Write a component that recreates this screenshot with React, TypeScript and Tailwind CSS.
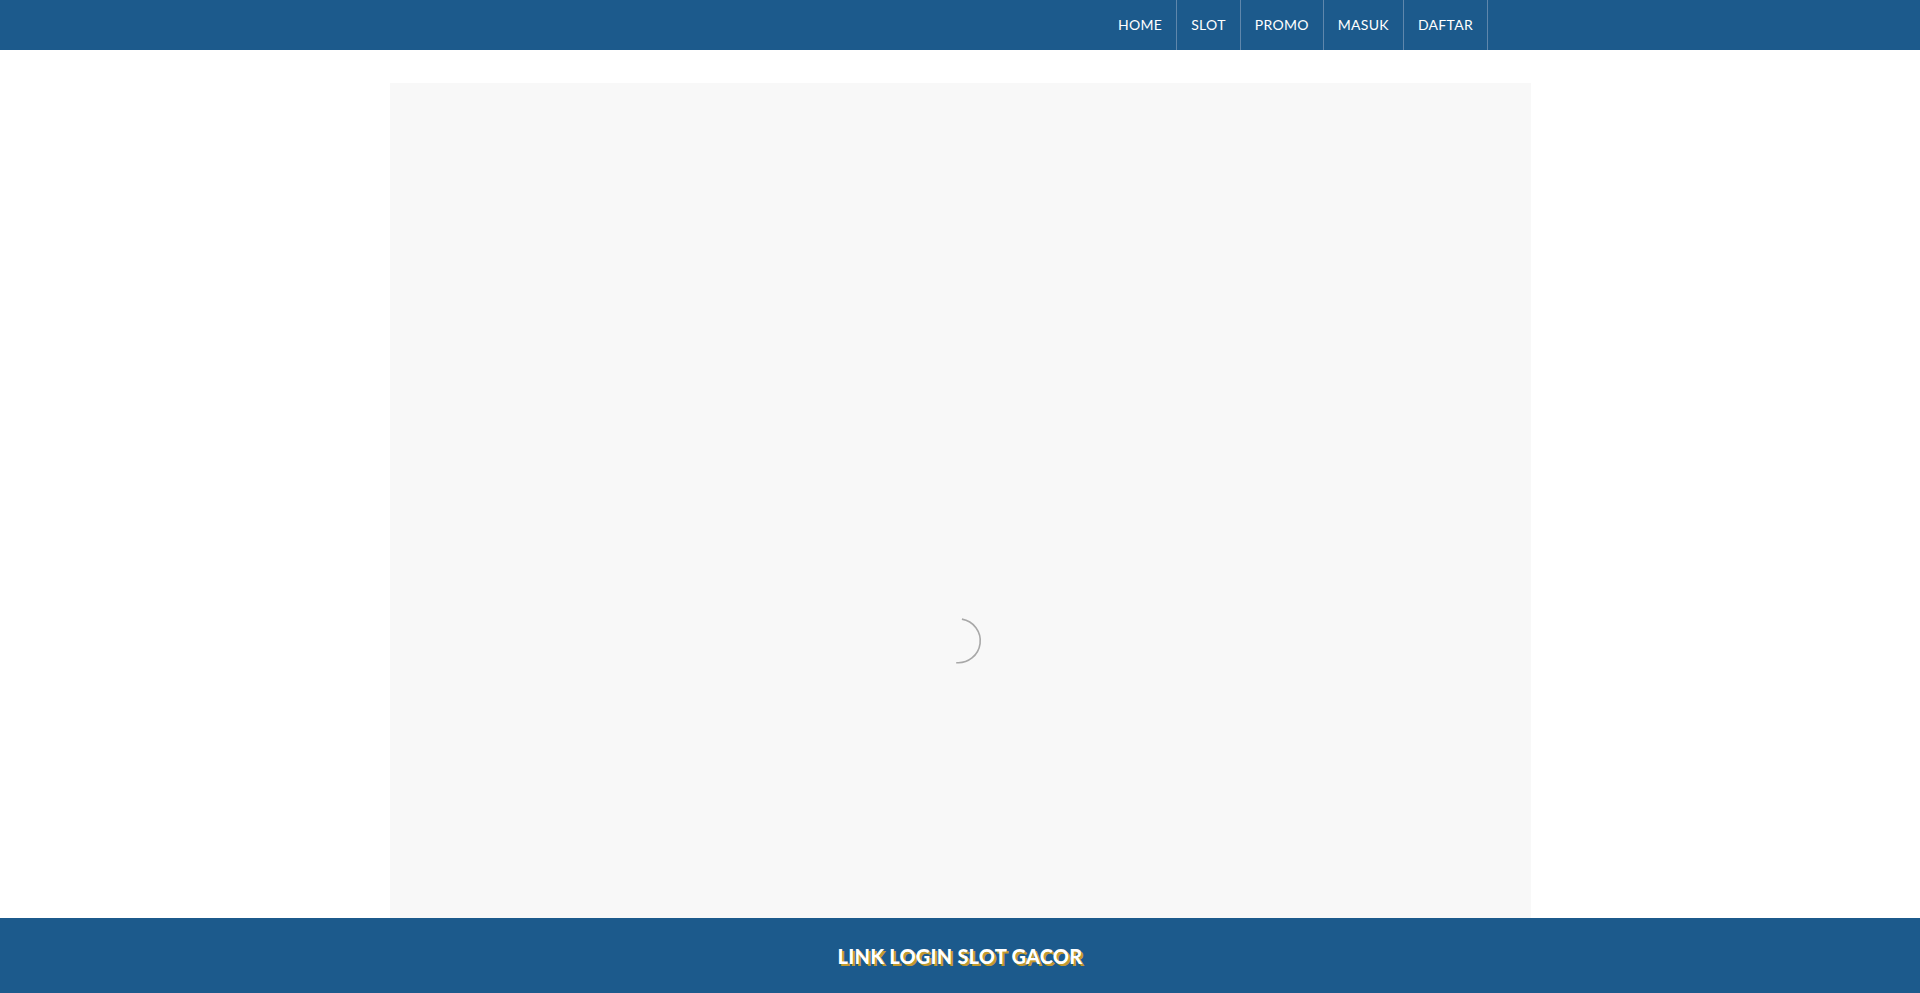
export default function App() {
  const links = ["HOME", "SLOT", "PROMO", "MASUK", "DAFTAR"]

  return (
    <div className="min-h-screen bg-white flex flex-col" style={{ fontFamily: "Lato, 'Noto Sans', sans-serif" }}>
      {/* NAVBAR */}
      <nav className="h-[50px] bg-[#1c5a8c] flex justify-end pr-[432px]">
        {links.map(l => (
          <a
            key={l}
            href="#"
            className="h-full flex items-center pb-[2px] px-[14px] text-[14px] text-white tracking-[0.3px] border-r border-[#5f87ac]"
          >
            {l}
          </a>
        ))}
      </nav>

      {/* CONTENT */}
      <div className="flex-1 flex justify-center pt-[33px]">
        <div className="w-[1141px] h-[835px] bg-[#f8f8f8] flex items-center justify-center">
          <svg width="50" height="50" viewBox="0 0 50 50" className="mt-[281px]">
            <path d="M26.9 3.1 A22 22 0 0 1 21.2 46.7" fill="none" stroke="#a8a8a8" strokeWidth="1.6" />
          </svg>
        </div>
      </div>

      {/* FOOTER */}
      <footer className="h-[75px] bg-[#1c5a8c] flex items-center justify-center">
        <span
          className="text-white text-[20px] font-black tracking-[0.2px]"
          style={{ textShadow: "2px 2px 0 #c49a2c" }}
        >
          LINK LOGIN SLOT GACOR
        </span>
      </footer>
    </div>
  )
}
